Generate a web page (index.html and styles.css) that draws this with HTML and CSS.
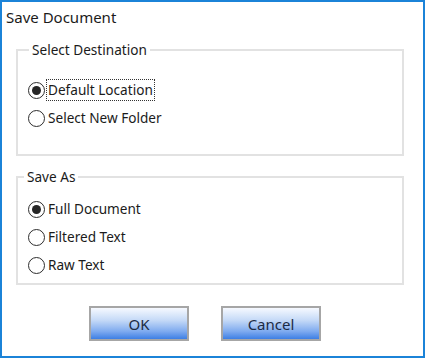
FILE: index.html
```html
<!DOCTYPE html>
<html lang="en">
<head>
  <meta charset="UTF-8">
  <title>Save Document</title>
  <link rel="stylesheet" href="styles.css">
</head>
<body>
<div class="dialog">
  <div class="title">Save Document</div>

  <fieldset class="group group-dest">
    <legend>Select Destination</legend>
    <label class="option">
      <span class="radio checked"></span>
      <span class="label focused">Default Location</span>
    </label>
    <label class="option">
      <span class="radio"></span>
      <span class="label">Select New Folder</span>
    </label>
  </fieldset>

  <fieldset class="group group-save">
    <legend>Save As</legend>
    <label class="option">
      <span class="radio checked"></span>
      <span class="label">Full Document</span>
    </label>
    <label class="option">
      <span class="radio"></span>
      <span class="label">Filtered Text</span>
    </label>
    <label class="option">
      <span class="radio"></span>
      <span class="label">Raw Text</span>
    </label>
  </fieldset>

  <div class="buttons">
    <button class="btn">OK</button>
    <button class="btn">Cancel</button>
  </div>
</div>
</body>
</html>
```

FILE: styles.css
```css
* { box-sizing: border-box; }
body { margin: 0; background: #fff; font-family: 'Noto Sans', 'Open Sans', sans-serif; font-size: 13.6px; color: #1b1b1b; }
.dialog { width: 425px; height: 358px; border: 2px solid #1b83d8; background: #fff; }
.title { padding: 5px 0 0 4px; line-height: 20px; margin-bottom: 13px; font-size: 15px; }

.group { margin: 0 0 0 14px; width: 388px; border: 2px solid #e2e2e2; padding: 16px 0 22px 10px; }
.group legend { line-height: 20px; padding: 0 3px; margin-left: 1px; }
.group-save { margin-top: 11px; padding-top: 8px; padding-bottom: 4px; }
.group-save legend { margin-left: -4px; }

.option { display: flex; align-items: center; height: 28px; }
.radio { width: 17px; height: 17px; border: 1.5px solid #2d2d2d; border-radius: 50%; display: flex; align-items: center; justify-content: center; margin-right: 1px; flex: none; }
.radio.checked::after { content: ''; width: 9px; height: 9px; border-radius: 50%; background: #262626; }
.label { line-height: 20px; padding: 0 1px; border: 1px dotted transparent; }
.label.focused { border-color: #333; }

.buttons { display: flex; gap: 32px; padding: 21px 0 0 87px; }
.btn { width: 100px; height: 35px; border: 2px solid #a6a6a6; font-family: inherit; font-size: 15px; color: #1c2b45; background: linear-gradient(#f6f9ff 0%, #c4d9f7 40%, #7fabef 75%, #3d7fe4 100%); }
```
